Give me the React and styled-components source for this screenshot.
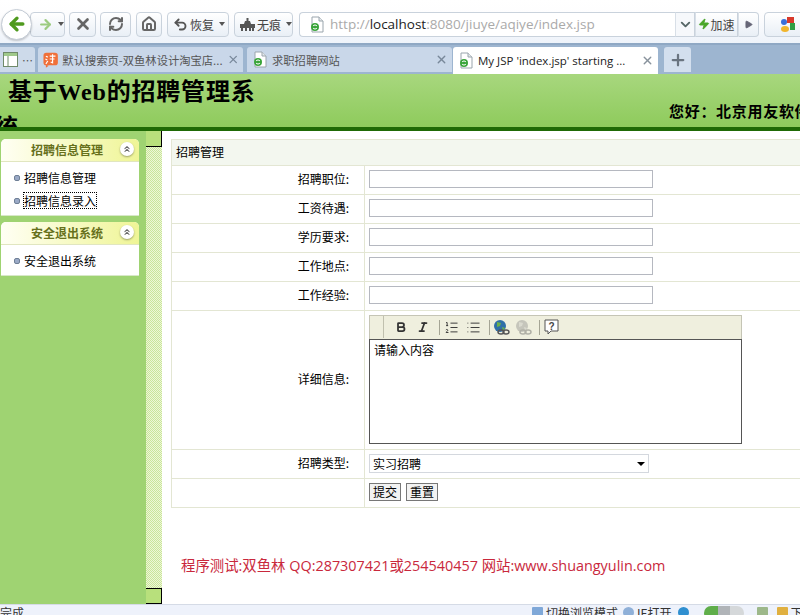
import React from "react";
import styled, { createGlobalStyle } from "styled-components";
import { ArrowLeft, ArrowRight, X, RefreshCw, Home, Undo2, Zap, ChevronDown, Play, Plus, ChevronsUp, Bold, Italic, ListOrdered, List } from "lucide-react";

const Global = createGlobalStyle`
  html, body { margin: 0; padding: 0; background: #fff; }
  body { font-family: "Noto Sans CJK SC", "Liberation Sans", sans-serif; font-size: 12px; color: #000; }
  * { box-sizing: border-box; }
`;

const Page = styled.div`
  width: 800px;
  height: 615px;
  overflow: hidden;
  display: flex;
  flex-direction: column;
`;

// browser chrome
const Toolbar = styled.div`
  height: 43px;
  flex-shrink: 0;
  display: flex;
  align-items: center;
  padding: 5px 0 0 1px;
  background: linear-gradient(#fff, #fdfdfe 40%, #eef3fa);
  color: #555;
`;

const BackCircle = styled.div`
  width: 31px;
  height: 31px;
  flex-shrink: 0;
  border-radius: 50%;
  background: #fff;
  border: 1px solid #c4ccd6;
  box-shadow: 0 1px 2px rgba(0, 0, 0, 0.2);
  display: flex;
  align-items: center;
  justify-content: center;
  color: #4f9a1e;
  z-index: 1;
`;

const ToolButton = styled.div`
  height: 25px;
  width: ${(p) => p.$w}px;
  margin-left: ${(p) => p.$ml || 0}px;
  padding-left: ${(p) => p.$pl || 0}px;
  border: 1px solid #c9d2dc;
  border-radius: 4px;
  background: linear-gradient(#fff, #e9eff6);
  display: flex;
  align-items: center;
  justify-content: ${(p) => (p.$pl ? "flex-start" : "center")};
  gap: 2px;
  font-size: 12px;
  color: #444;
  flex-shrink: 0;
`;

const Caret = styled.span`
  width: 0;
  height: 0;
  margin-left: 3px;
  border: 3px solid transparent;
  border-top: 4px solid #555;
  border-bottom: 0;
`;

const UrlBox = styled.div`
  width: 376px;
  height: 25px;
  margin-left: 6px;
  padding-left: 9px;
  border: 1px solid #c9d2dc;
  border-right: 0;
  border-radius: 4px 0 0 4px;
  background: #fff;
  display: flex;
  align-items: center;
  gap: 5px;
  font-family: "Open Sans", sans-serif;
  font-size: 13.500px;
  color: #aaa;
  flex-shrink: 0;
`;

const UrlHost = styled.span`
  color: #222;
`;

const UrlSegment = styled.div`
  height: 25px;
  width: ${(p) => p.$w}px;
  border: 1px solid #c9d2dc;
  border-left-color: #d8dfe7;
  border-radius: ${(p) => (p.$end ? "0 4px 4px 0" : "0")};
  background: ${(p) => (p.$plain ? "#f6f8fb" : "linear-gradient(#fff, #e9eff6)")};
  display: flex;
  align-items: center;
  justify-content: center;
  font-size: 12px;
  color: #444;
  flex-shrink: 0;
`;

const TabBar = styled.div`
  height: 31px;
  flex-shrink: 0;
  display: flex;
  align-items: flex-end;
  background: #9db5d0;
  border-top: 2px solid #8fa8c4;
  padding-bottom: 2px;
`;

const SideTab = styled.div`
  width: 35px;
  height: 25px;
  background: #cddaea;
  border-radius: 0 3px 0 0;
  display: flex;
  align-items: center;
  gap: 4px;
  padding-left: 3px;
  font-size: 11px;
  color: #555;
  flex-shrink: 0;
`;

const Tab = styled.div`
  width: 205px;
  height: ${(p) => (p.$active ? "27px" : "25px")};
  margin-left: ${(p) => p.$ml}px;
  margin-bottom: ${(p) => (p.$active ? "-2px" : "0")};
  padding: 0 4px 0 5px;
  background: ${(p) => (p.$active ? "#fff" : "#c9d7e9")};
  border-radius: 3px 3px 0 0;
  display: flex;
  align-items: center;
  gap: 4px;
  font-size: 11.300px;
  color: ${(p) => (p.$active ? "#222" : "#555")};
  flex-shrink: 0;
`;

const TabTitle = styled.span`
  flex: 1;
  white-space: nowrap;
  font-family: ${(p) => (p.$latin ? '"Open Sans", sans-serif' : "inherit")};
  font-size: ${(p) => (p.$latin ? "11.500px" : "inherit")};
`;

const NewTab = styled.div`
  width: 27px;
  height: 25px;
  margin-left: 6px;
  background: #d3dfee;
  border-radius: 3px 3px 0 0;
  display: flex;
  align-items: center;
  justify-content: center;
  color: #6a7480;
`;

// page header
const Header = styled.div`
  height: 53px;
  flex-shrink: 0;
  overflow: hidden;
  display: flex;
  background: linear-gradient(#a8d77e, #8ecb5c);
`;

const Title = styled.h1`
  width: 263px;
  margin: 0 0 0 -6px;
  flex-shrink: 0;
  text-indent: 14px;
  font-family: "Liberation Serif", "Noto Sans CJK SC", serif;
  font-size: 24px;
  font-weight: 700;
  letter-spacing: 0.800px;
  line-height: 36px;
`;

const Greeting = styled.div`
  margin: 26px 0 0 412px;
  flex-shrink: 0;
  white-space: nowrap;
  font-size: 15px;
  font-weight: 700;
  letter-spacing: 0.700px;
  line-height: 22px;
`;

const HeaderRule = styled.div`
  height: 4px;
  flex-shrink: 0;
  background: #1f6a05;
`;

// body
const Main = styled.div`
  flex: 1;
  min-height: 0;
  display: flex;
`;

const Sidebar = styled.div`
  width: 146px;
  flex-shrink: 0;
  padding: 8px 7px 0 1px;
  background: #9fd372;
  display: flex;
  flex-direction: column;
  gap: 6px;
`;

const Panel = styled.div`
  background: #fff;
  border-radius: 5px 5px 0 0;
  border-bottom: 1px solid #d8e8c8;
`;

const PanelHead = styled.div`
  height: 23px;
  padding: 0 5px 2px 30px;
  border-radius: 5px 5px 0 0;
  border-bottom: 1px solid #e1e6c0;
  background: linear-gradient(90deg, #fffff4, #eff596);
  display: flex;
  align-items: center;
  justify-content: space-between;
  font-weight: 700;
  color: #66701c;
`;

const Collapse = styled.span`
  width: 14px;
  height: 14px;
  border-radius: 50%;
  background: #fff;
  box-shadow: 0 1px 2px rgba(0, 0, 0, 0.35);
  display: flex;
  align-items: center;
  justify-content: center;
  color: #666;
`;

const PanelList = styled.ul`
  list-style: none;
  margin: 0;
  padding: 4px 0 3px 13px;
`;

const PanelItem = styled.li`
  height: 23px;
  display: flex;
  align-items: center;
  gap: 4px;
`;

const Bullet = styled.span`
  width: 6px;
  height: 6px;
  border-radius: 2px;
  background: #9aa9c6;
  border: 1px solid #6f7f96;
`;

const ItemText = styled.span`
  line-height: 15px;
  outline: ${(p) => (p.$focus ? "1px dotted #000" : "none")};
`;

const Splitter = styled.div`
  width: 16px;
  flex-shrink: 0;
  display: flex;
  flex-direction: column;
  justify-content: space-between;
  background: repeating-conic-gradient(#c9e59a 0 25%, #eef7d8 0 50%) 0 0 / 2px 2px;
`;

const SplitterCap = styled.div`
  height: 16px;
  background: #b8e07c;
  border-right: 1px solid #000;
  border-bottom: 1px solid #000;
  border-top: ${(p) => (p.$bottom ? "1px solid #000" : "0")};
`;

const Content = styled.div`
  flex: 1;
  min-width: 0;
  overflow: hidden;
  padding: 8px 0 0 9px;
`;

const FormTable = styled.table`
  width: 660px;
  border-collapse: collapse;
  table-layout: fixed;
`;

const HeadCell = styled.td`
  height: 26px;
  padding: 0 0 2px 4px;
  background: #f3f7ef;
  border: 1px solid #e3e6d3;
`;

const LabelCell = styled.td`
  padding: 0 15px 3px 0;
  text-align: right;
  border: 1px solid #e3e6d3;
  height: ${(p) => p.$h || 29}px;
`;

const FieldCell = styled.td`
  padding: 0 0 2px 4px;
  border: 1px solid #e3e6d3;
`;

const TextInput = styled.input`
  display: block;
  width: 284px;
  height: 18px;
  padding: 0 2px;
  border: 1px solid #b5b8c0;
  background: #fff;
`;

const Editor = styled.div`
  width: 373px;
  height: 129px;
  display: flex;
  flex-direction: column;
`;

const EditorBar = styled.div`
  height: 24px;
  flex-shrink: 0;
  display: flex;
  align-items: center;
  border: 1px solid #c5c5b5;
  border-bottom: 0;
  background: #efefde;
  color: #333;
`;

const EditorGrip = styled.span`
  width: 14px;
  height: 22px;
  margin-right: 6px;
  border-right: 1px solid #c0c0ae;
`;

const EditorCell = styled.span`
  width: 22px;
  display: flex;
  justify-content: center;
`;

const EditorSep = styled.span`
  width: 1px;
  height: 15px;
  margin-left: 5px;
  background: #a5a595;
`;

const EditorBody = styled.div`
  flex: 1;
  padding: 1px 4px;
  border: 1px solid #555;
  background: #fff;
  font-size: 12px;
`;

const SelectBox = styled.div`
  position: relative;
  width: 280px;

  &::after {
    content: "";
    position: absolute;
    right: 4px;
    top: 8px;
    border: 4px solid transparent;
    border-top: 4px solid #000;
    border-bottom: 0;
  }
`;

const Select = styled.select`
  display: block;
  width: 100%;
  height: 19px;
  padding: 0 3px;
  appearance: none;
  border: 1px solid #d4d8de;
  border-radius: 0;
  background: #fff;
  font-family: inherit;
  font-size: 12px;
`;

const Actions = styled.div`
  display: flex;
  gap: 5px;
`;

const FormButton = styled.button`
  width: 32px;
  height: 18px;
  padding: 0;
  border: 1px solid #777;
  background: #f2f2f2;
  font-family: inherit;
  font-size: 12px;
  line-height: 14px;
`;

const Credit = styled.p`
  margin: 48px 0 0 10px;
  white-space: nowrap;
  font-family: "Open Sans", "Noto Sans CJK SC", sans-serif;
  font-size: 14.400px;
  line-height: 20px;
  color: #c9283c;
`;

const StatusBar = styled.div`
  height: 11px;
  flex-shrink: 0;
  overflow: hidden;
  display: flex;
  background: #eef2fb;
  border-top: 1px solid #d5dbe6;
  font-size: 12px;
  line-height: 16px;
  color: #333;
`;

const StatusText = styled.span`
  white-space: nowrap;
  flex-shrink: 0;
`;

const StatusRight = styled.div`
  margin-left: 508px;
  flex-shrink: 0;
  display: flex;
  align-items: flex-start;
  gap: 3px;
  white-space: nowrap;
`;

const Dot = styled.span`
  width: 11px;
  height: 11px;
  margin-top: 2px;
  margin-left: ${(p) => p.$ml || 0}px;
  border-radius: ${(p) => (p.$square ? "1px" : "50%")};
  background: ${(p) => p.$c};
  flex-shrink: 0;
`;

const Pill = styled.span`
  width: 40px;
  height: 14px;
  margin: 1px 10px 0 12px;
  border-radius: 7px;
  flex-shrink: 0;
  background: linear-gradient(90deg, #5fae4a 0 35%, #b0b4b8 35% 65%, #d5d8da 65%);
`;

const PageIcon = () => (
  <svg width="16" height="17" viewBox="0 0 16 17">
    <path d="M3 1h7l4 4v11H3z" fill="#fff" stroke="#9aa5ad" />
    <path d="M10 1v4h4" fill="#e5e9ec" stroke="#9aa5ad" />
    <circle cx="6" cy="11" r="4" fill="#3aa53a" />
    <path d="M4 10a2.500 2.500 0 0 1 4 0M8 12a2.500 2.500 0 0 1-4 0" fill="none" stroke="#fff" strokeWidth="1" />
  </svg>
);

const TaobaoIcon = () => (
  <svg width="16" height="16" viewBox="0 0 16 16">
    <rect x="0.500" y="0.500" width="15" height="13" rx="3" fill="#f0703a" />
    <path d="M3 13v3l3-2z" fill="#f0703a" />
    <path d="M3 4l2 1M2.500 7l2 1M3 12l2-3M7 4h6M7 7h5M10 2v9l-2-1" fill="none" stroke="#fff" strokeWidth="1.200" />
  </svg>
);

const GoogleIcon = () => (
  <svg width="18" height="17" viewBox="0 0 18 17">
    <rect x="7" y="1" width="7" height="6" fill="#d8392b" />
    <rect x="10" y="7" width="5" height="7" fill="#2f9e44" />
    <circle cx="4" cy="6" r="3" fill="#3a6fd8" />
    <ellipse cx="5" cy="13" rx="4" ry="3" fill="#f1b52c" />
  </svg>
);

const SideIcon = () => (
  <svg width="15" height="15" viewBox="0 0 15 15">
    <rect x="0.500" y="0.500" width="14" height="14" fill="#fff" stroke="#6f8a6a" />
    <rect x="1" y="1" width="13" height="3" fill="#9fc98a" />
    <path d="M5 4v10" stroke="#6f8a6a" />
  </svg>
);

const StackIcon = () => (
  <svg width="15" height="15" viewBox="0 0 15 15">
    <path d="M7.500 1v4M1 8h13v2H1zM2 11v3M6 11v3M10 11v3M13 11v3" stroke="#555" strokeWidth="2" fill="none" />
    <path d="M4 7l1-3h5l1 3z" fill="#555" />
  </svg>
);

const GlobeIcon = ({ muted }) => (
  <svg width="17" height="17" viewBox="0 0 17 17" opacity={muted ? 0.4 : 1}>
    <circle cx="7" cy="7" r="6" fill={muted ? "#888" : "#2f6fa8"} />
    <path d="M4 3l4 1-1 3-3 1zM9 8l3 1-2 3z" fill={muted ? "#bbb" : "#6ab04c"} />
    <ellipse cx="8" cy="13" rx="3" ry="2" fill="none" stroke="#555" strokeWidth="1.500" />
    <ellipse cx="13" cy="13" rx="3" ry="2" fill="none" stroke="#555" strokeWidth="1.500" />
  </svg>
);

const HelpIcon = () => (
  <svg width="15" height="16" viewBox="0 0 15 16">
    <path d="M1 1h13v11H7l-3 3v-3H1z" fill="#fff" stroke="#555" />
    <text x="7.500" y="10.500" fontSize="10" fontWeight="700" textAnchor="middle" fill="#444" fontFamily="Liberation Sans">?</text>
  </svg>
);

const fields = ["招聘职位", "工资待遇", "学历要求", "工作地点", "工作经验"];

const App = () => {
  return (
    <Page>
      <Global />
      <Toolbar>
        <BackCircle>
          <ArrowLeft size={20} strokeWidth={4} />
        </BackCircle>
        <ToolButton $w={35} $pl={7} $ml={-2}>
          <ArrowRight size={15} strokeWidth={3.5} color="#9ccb80" />
          <Caret />
        </ToolButton>
        <ToolButton $w={27} $ml={4}><X size={18} strokeWidth={3.5} color="#666" /></ToolButton>
        <ToolButton $w={31} $ml={4}><RefreshCw size={16} strokeWidth={3} color="#666" /></ToolButton>
        <ToolButton $w={26} $ml={5}><Home size={16} strokeWidth={3} color="#666" /></ToolButton>
        <ToolButton $w={62} $ml={5} $pl={5}><Undo2 size={15} strokeWidth={3} color="#555" />恢复<Caret /></ToolButton>
        <ToolButton $w={59} $ml={5} $pl={5}><StackIcon />无痕<Caret /></ToolButton>
        <UrlBox>
          <PageIcon />
          <span>http://<UrlHost>localhost</UrlHost>:8080/jiuye/aqiye/index.jsp</span>
        </UrlBox>
        <UrlSegment $w={20} $plain><ChevronDown size={15} strokeWidth={3} color="#566" /></UrlSegment>
        <UrlSegment $w={43}><Zap size={12} fill="#4aa62a" color="#4aa62a" />加速</UrlSegment>
        <UrlSegment $w={21} $end><Play size={9} fill="#667" color="#667" /></UrlSegment>
        <ToolButton $w={50} $ml={5}><GoogleIcon /></ToolButton>
      </Toolbar>
      <TabBar>
        <SideTab><SideIcon />…</SideTab>
        <Tab $ml={3}>
          <TaobaoIcon />
          <TabTitle>默认搜索页-双鱼林设计淘宝店...</TabTitle>
          <X size={13} strokeWidth={2.5} color="#78889a" />
        </Tab>
        <Tab $ml={4}>
          <PageIcon />
          <TabTitle>求职招聘网站</TabTitle>
          <X size={13} strokeWidth={2.5} color="#78889a" />
        </Tab>
        <Tab $ml={1} $active>
          <PageIcon />
          <TabTitle $latin>My JSP 'index.jsp' starting ...</TabTitle>
          <X size={13} strokeWidth={2.5} color="#88929c" />
        </Tab>
        <NewTab><Plus size={18} strokeWidth={3} /></NewTab>
      </TabBar>
      <Header>
        <Title>基于Web的招聘管理系统</Title>
        <Greeting>您好：北京用友软件</Greeting>
      </Header>
      <HeaderRule />
      <Main>
        <Sidebar>
          <Panel>
            <PanelHead>招聘信息管理<Collapse><ChevronsUp size={10} strokeWidth={2.5} /></Collapse></PanelHead>
            <PanelList>
              <PanelItem><Bullet /><ItemText>招聘信息管理</ItemText></PanelItem>
              <PanelItem><Bullet /><ItemText $focus>招聘信息录入</ItemText></PanelItem>
            </PanelList>
          </Panel>
          <Panel>
            <PanelHead>安全退出系统<Collapse><ChevronsUp size={10} strokeWidth={2.5} /></Collapse></PanelHead>
            <PanelList>
              <PanelItem><Bullet /><ItemText>安全退出系统</ItemText></PanelItem>
            </PanelList>
          </Panel>
        </Sidebar>
        <Splitter>
          <SplitterCap />
          <SplitterCap $bottom />
        </Splitter>
        <Content>
          <FormTable>
            <colgroup>
              <col width="193" />
              <col />
            </colgroup>
            <tbody>
              <tr><HeadCell colSpan={2}>招聘管理</HeadCell></tr>
              {fields.map((f) => (
                <tr key={f}>
                  <LabelCell>{f}:</LabelCell>
                  <FieldCell><TextInput /></FieldCell>
                </tr>
              ))}
              <tr>
                <LabelCell $h={139}>详细信息:</LabelCell>
                <FieldCell>
                  <Editor>
                    <EditorBar>
                      <EditorGrip />
                      <EditorCell><Bold size={12} strokeWidth={3.5} /></EditorCell>
                      <EditorCell><Italic size={12} strokeWidth={3.5} /></EditorCell>
                      <EditorSep />
                      <EditorCell><ListOrdered size={15} strokeWidth={1.5} /></EditorCell>
                      <EditorCell><List size={15} strokeWidth={1.5} /></EditorCell>
                      <EditorSep />
                      <EditorCell><GlobeIcon /></EditorCell>
                      <EditorCell><GlobeIcon muted /></EditorCell>
                      <EditorSep />
                      <EditorCell><HelpIcon /></EditorCell>
                    </EditorBar>
                    <EditorBody>请输入内容</EditorBody>
                  </Editor>
                </FieldCell>
              </tr>
              <tr>
                <LabelCell>招聘类型:</LabelCell>
                <FieldCell>
                  <SelectBox>
                    <Select defaultValue="实习招聘"><option>实习招聘</option></Select>
                  </SelectBox>
                </FieldCell>
              </tr>
              <tr>
                <LabelCell />
                <FieldCell>
                  <Actions>
                    <FormButton>提交</FormButton>
                    <FormButton>重置</FormButton>
                  </Actions>
                </FieldCell>
              </tr>
            </tbody>
          </FormTable>
          <Credit>程序测试:双鱼林 QQ:287307421或254540457 网站:www.shuangyulin.com</Credit>
        </Content>
      </Main>
      <StatusBar>
        <StatusText>完成</StatusText>
        <StatusRight>
          <Dot $square $c="#7fa8d8" />
          <span>切换浏览模式</span>
          <Dot $ml={2} $c="#8fb0d8" />
          <span>IE打开</span>
          <Dot $ml={3} $c="#2f8fd0" />
          <Pill />
          <Dot $square $c="#9db88a" />
          <Dot $ml={6} $square $c="#e0b040" />
          <span>下载</span>
        </StatusRight>
      </StatusBar>
    </Page>
  );
};

export default App;
